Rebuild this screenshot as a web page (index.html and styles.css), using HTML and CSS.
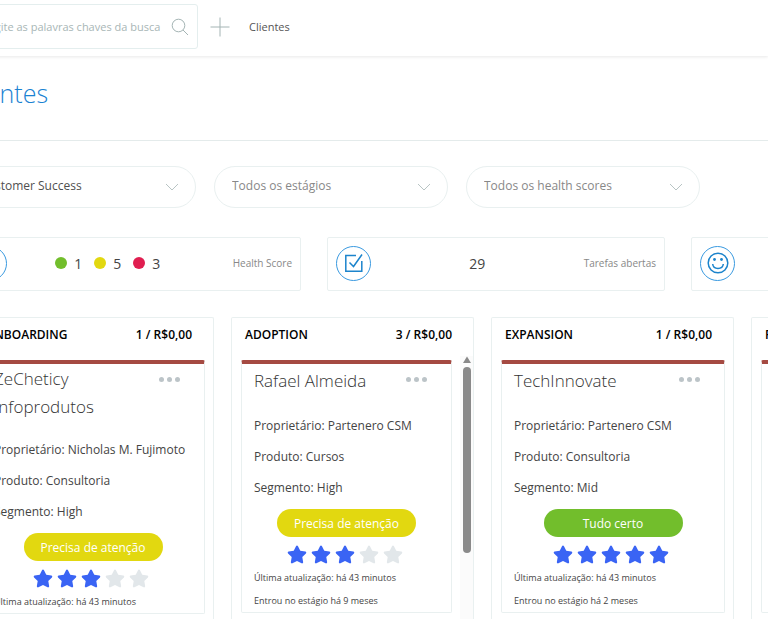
FILE: index.html
```
<!DOCTYPE html>
<html lang="pt-BR">
    <head>
        <meta charset="UTF-8">
        <meta name="viewport" content="width=device-width, initial-scale=1.0">
        <title>Clientes</title>
        <link rel="stylesheet" href="styles.css">
    </head>
    <body>
        <!-- shared icons -->
        <svg class="sprite" aria-hidden="true">
            <symbol id="star" viewBox="0 0 576 512">
                <path d="M259.3 17.8L194 150.2 47.900 171.500c-26.200 3.800-36.700 36.100-17.700 54.600l105.700 103-25 145.500c-4.500 26.300 23.200 46 46.400 33.700L288 439.600l130.700 68.700c23.200 12.200 50.900-7.400 46.400-33.700l-25-145.500 105.700-103c19-18.500 8.500-50.800-17.700-54.600L382 150.200 316.700 17.800c-11.700-23.600-45.600-23.900-57.400 0z"/>
            </symbol>
            <symbol id="chevron" viewBox="0 0 14 8">
                <path d="M1 1l6 6 6-6" fill="none" stroke="currentColor"/>
            </symbol>
        </svg>

        <header class="topbar">
            <form class="search">
                <input type="text" placeholder="Digite as palavras chaves da busca" aria-label="Busca">
                <button type="button" aria-label="Buscar">
                    <svg width="18" height="18" viewBox="0 0 18 18"><circle cx="7.500" cy="7.500" r="6.300"/><path d="M12 12l5 5"/></svg>
                </button>
            </form>
            <button class="add-btn" type="button" aria-label="Adicionar">
                <svg width="20" height="20" viewBox="0 0 20 20"><path d="M10 .5v19M.5 10h19"/></svg>
            </button>
            <a class="crumb" href="#">Clientes</a>
        </header>

        <div class="title-bar">
            <h1>Clientes</h1>
        </div>

        <main class="content">
            <div class="filters">
                <div class="filter selected">
                    <select aria-label="Pipeline"><option>Customer Success</option></select>
                    <svg width="14" height="8"><use href="#chevron"/></svg>
                </div>
                <div class="filter">
                    <select aria-label="Estágio"><option>Todos os estágios</option></select>
                    <svg width="14" height="8"><use href="#chevron"/></svg>
                </div>
                <div class="filter">
                    <select aria-label="Health score"><option>Todos os health scores</option></select>
                    <svg width="14" height="8"><use href="#chevron"/></svg>
                </div>
            </div>

            <div class="summary">
                <div class="summary-card">
                    <span class="round-icon"></span>
                    <div class="scores">
                        <span class="score"><i class="dot green"></i>1</span>
                        <span class="score"><i class="dot yellow"></i>5</span>
                        <span class="score"><i class="dot red"></i>3</span>
                    </div>
                    <span class="caption">Health Score</span>
                </div>
                <div class="summary-card">
                    <span class="round-icon">
                        <svg width="20" height="20" viewBox="0 0 20 20"><path d="M12 2.500H1.800v15.700h16V8M5.500 9.500l4 4L18 1.500"/></svg>
                    </span>
                    <span class="total">29</span>
                    <span class="caption">Tarefas abertas</span>
                </div>
                <div class="summary-card">
                    <span class="round-icon">
                        <svg width="22" height="22" viewBox="0 0 22 22"><circle cx="11" cy="11" r="9.800"/><path d="M5.700 12c.6 6 10 6 10.600 0"/><circle class="eye" cx="7.500" cy="7.500" r="1.400"/><circle class="eye" cx="14.500" cy="7.500" r="1.400"/></svg>
                    </span>
                </div>
            </div>

            <div class="board">
                <section class="column">
                    <div class="column-head"><h2>ONBOARDING</h2><span>1 / R$0,00</span></div>
                    <div class="column-body">
                        <article class="card">
                            <div class="card-top">
                                <h3>ZeCheticy Infoprodutos</h3>
                                <button class="more" type="button" aria-label="Opções"><i></i><i></i><i></i></button>
                            </div>
                            <p>Proprietário: Nicholas M. Fujimoto</p>
                            <p>Produto: Consultoria</p>
                            <p>Segmento: High</p>
                            <button class="status yellow" type="button">Precisa de atenção</button>
                            <div class="stars">
                                <svg class="on"><use href="#star"/></svg>
                                <svg class="on"><use href="#star"/></svg>
                                <svg class="on"><use href="#star"/></svg>
                                <svg><use href="#star"/></svg>
                                <svg><use href="#star"/></svg>
                            </div>
                            <small>Última atualização: há 43 minutos</small>
                        </article>
                    </div>
                </section>

                <section class="column">
                    <div class="column-head"><h2>ADOPTION</h2><span>3 / R$0,00</span></div>
                    <div class="column-body">
                        <article class="card">
                            <div class="card-top">
                                <h3>Rafael Almeida</h3>
                                <button class="more" type="button" aria-label="Opções"><i></i><i></i><i></i></button>
                            </div>
                            <p>Proprietário: Partenero CSM</p>
                            <p>Produto: Cursos</p>
                            <p>Segmento: High</p>
                            <button class="status yellow" type="button">Precisa de atenção</button>
                            <div class="stars">
                                <svg class="on"><use href="#star"/></svg>
                                <svg class="on"><use href="#star"/></svg>
                                <svg class="on"><use href="#star"/></svg>
                                <svg><use href="#star"/></svg>
                                <svg><use href="#star"/></svg>
                            </div>
                            <small>Última atualização: há 43 minutos</small>
                            <small>Entrou no estágio há 9 meses</small>
                        </article>
                        <div class="scrollbar">
                            <svg width="8" height="8" viewBox="0 0 8 8"><path d="M4 0.500L8 7H0z"/></svg>
                            <div class="thumb"></div>
                        </div>
                    </div>
                </section>

                <section class="column">
                    <div class="column-head"><h2>EXPANSION</h2><span>1 / R$0,00</span></div>
                    <div class="column-body">
                        <article class="card">
                            <div class="card-top">
                                <h3>TechInnovate</h3>
                                <button class="more" type="button" aria-label="Opções"><i></i><i></i><i></i></button>
                            </div>
                            <p>Proprietário: Partenero CSM</p>
                            <p>Produto: Consultoria</p>
                            <p>Segmento: Mid</p>
                            <button class="status green" type="button">Tudo certo</button>
                            <div class="stars">
                                <svg class="on"><use href="#star"/></svg>
                                <svg class="on"><use href="#star"/></svg>
                                <svg class="on"><use href="#star"/></svg>
                                <svg class="on"><use href="#star"/></svg>
                                <svg class="on"><use href="#star"/></svg>
                            </div>
                            <small>Última atualização: há 43 minutos</small>
                            <small>Entrou no estágio há 2 meses</small>
                        </article>
                    </div>
                </section>

                <section class="column">
                    <div class="column-head"><h2>R</h2></div>
                    <div class="column-body">
                        <article class="card empty"></article>
                    </div>
                </section>
            </div>
        </main>
    </body>
</html>
```

FILE: styles.css
```
* {
    box-sizing: border-box;
}
body {
    margin: 0;
    height: 100vh;
    overflow: hidden;
    display: flex;
    flex-direction: column;
    font-family: "Open Sans", sans-serif;
    font-size: 12px;
    color: #444;
    background-color: #fff;
}
h1, h2, h3, p {
    margin: 0;
}
button {
    font-family: inherit;
    border: none;
    background: none;
    padding: 0;
    cursor: pointer;
}
.sprite {
    display: none;
}

/* top bar */
.topbar {
    display: flex;
    align-items: center;
    flex: none;
    height: 56px;
    padding-bottom: 3px;
    margin-left: -38px;
    box-shadow: 0 1px 3px #e8e8e8;
}
.search {
    display: flex;
    align-items: center;
    width: 236px;
    height: 45px;
    padding: 0 8px 0 5px;
    border: 1px solid #e4eeee;
    border-radius: 3px;
}
.search input {
    flex: 1;
    min-width: 0;
    border: none;
    outline: none;
    padding: 0 0 0 16px;
    font-family: inherit;
    font-size: 11px;
}
.search input::placeholder {
    color: #a8b6b6;
}
.search svg, .add-btn svg {
    display: block;
    fill: none;
    stroke: #a4b4b4;
}
.add-btn {
    margin: 0 19px 0 12px;
}
.crumb {
    color: #555;
    font-size: 11px;
    text-decoration: none;
}

/* page title */
.title-bar {
    flex: none;
    height: 85px;
    padding-top: 19px;
    margin-left: -41px;
    border-bottom: 1px solid #e4ebeb;
}
h1 {
    font-size: 25px;
    line-height: 36px;
    font-weight: 300;
    color: #1a82d2;
}

.content {
    flex: 1;
    min-height: 0;
    display: flex;
    flex-direction: column;
    margin-left: -38px;
    padding-top: 25px;
}

/* filters */
.filters {
    display: flex;
    gap: 18px;
    margin-bottom: 29px;
}
.filter {
    display: grid;
    align-items: center;
    width: 234px;
    height: 42px;
}
.filter select, .filter svg {
    grid-area: 1 / 1;
}
.filter select {
    appearance: none;
    width: 100%;
    height: 100%;
    padding: 0 40px 4px 17px;
    border: 1px solid #e9f0f0;
    border-radius: 21px;
    background: none;
    font-family: inherit;
    font-size: 12px;
    color: #888;
}
.filter.selected select {
    color: #505050;
}
.filter svg {
    justify-self: end;
    margin-right: 17px;
    color: #b8c4c4;
    pointer-events: none;
}

/* summary cards */
.summary {
    display: flex;
    gap: 26px;
    margin-bottom: 26px;
    padding-left: 1px;
}
.summary-card {
    flex: none;
    display: flex;
    align-items: center;
    justify-content: space-between;
    width: 338px;
    height: 54px;
    padding: 0 8px 2px;
    border: 1px solid #e9f0f0;
    border-radius: 2px;
}
.round-icon {
    display: flex;
    align-items: center;
    justify-content: center;
    width: 35px;
    height: 35px;
    border: 1px solid #3a9ae0;
    border-radius: 50%;
}
.round-icon svg {
    fill: none;
    stroke: #1c84cc;
    stroke-width: 1.5;
}
.round-icon .eye {
    fill: #1c84cc;
    stroke: none;
}
.scores {
    display: flex;
    margin-right: 12px;
}
.score {
    display: flex;
    align-items: center;
    gap: 7px;
    margin-right: 12px;
    font-size: 14px;
}
.dot {
    width: 12px;
    height: 12px;
    border-radius: 50%;
}
.total {
    font-size: 14px;
}
.caption {
    font-size: 10px;
    color: #888;
}
.green {
    background-color: #72be2c;
}
.yellow {
    background-color: #e2d810;
}
.red {
    background-color: #e01e50;
}

/* board */
.board {
    flex: 1;
    min-height: 0;
    display: flex;
    gap: 17px;
    padding-left: 9px;
}
.column {
    flex: none;
    display: flex;
    flex-direction: column;
    width: 243px;
    border: 1px solid #e9f0f0;
    border-bottom: none;
    border-radius: 2px 2px 0 0;
}
.column-head {
    display: flex;
    justify-content: space-between;
    padding: 8px 21px 0 13px;
    height: 38px;
    font-size: 12px;
    line-height: 18px;
    font-weight: 600;
    color: #000;
}
.column-head h2 {
    font-size: 12px;
    font-weight: 600;
}
.column-body {
    flex: 1;
    min-height: 0;
    display: flex;
    align-items: flex-start;
    gap: 8px;
    padding-left: 9px;
}
.column-body > .card:last-child {
    margin-right: 8px;
}
.card {
    flex: 1;
    margin-top: 4px;
    padding: 1px 12px 0;
    border: 1px solid #e9f0f0;
    border-top: 4px solid #a54a42;
    border-radius: 2px;
}
.card.empty {
    height: 253px;
}
.card-top {
    display: flex;
    align-items: center;
    justify-content: space-between;
    min-height: 32px;
    margin-bottom: 13px;
    padding-right: 12px;
}
.card h3 {
    font-size: 17px;
    line-height: 28px;
    font-weight: 300;
    color: #333;
}
.more {
    align-self: flex-start;
    display: flex;
    gap: 3px;
    padding-top: 12px;
}
.more i {
    width: 5px;
    height: 5px;
    border-radius: 50%;
    background-color: #bcc4c8;
}
.card p {
    font-size: 12px;
    line-height: 31px;
    white-space: nowrap;
}
.status {
    display: block;
    width: 139px;
    height: 28px;
    margin: 6px auto 8px;
    border-radius: 14px;
    color: #fff;
    font-size: 12px;
}
.stars {
    display: flex;
    justify-content: center;
    margin-bottom: 2px;
}
.stars svg {
    width: 20px;
    height: 19px;
    margin-right: 4px;
    fill: #e2e7ea;
}
.stars .on {
    fill: #3a64f4;
}
.card small {
    display: block;
    font-size: 9px;
    line-height: 23px;
}

.scrollbar {
    align-self: stretch;
    display: flex;
    flex-direction: column;
    align-items: center;
    gap: 3px;
    width: 13px;
    background-color: #fbfbfb;
    fill: #8a8a8a;
}
.scrollbar svg {
    flex: none;
}
.thumb {
    width: 8px;
    height: 186px;
    border-radius: 4px;
    background-color: #8a8a8a;
}
```
